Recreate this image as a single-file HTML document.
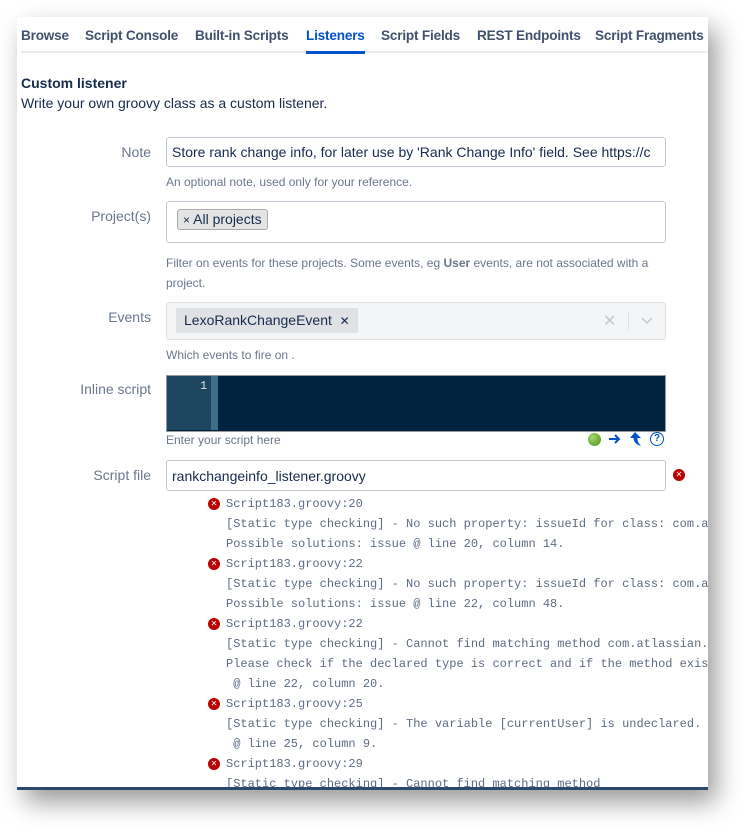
<!DOCTYPE html>
<html><head><meta charset="utf-8"><style>
body{margin:0;width:756px;height:837px;background:#fff;position:relative;overflow:hidden;font-family:"Liberation Sans",sans-serif;color:#172b4d}
.panel{position:absolute;left:17px;top:17px;width:691px;height:770px;background:#fff;box-shadow:8px 12px 24px rgba(0,0,0,.4);overflow:hidden;border-bottom:3px solid #2a4a6b}
.abs{position:absolute;white-space:nowrap}
.tab{position:absolute;top:11px;font-size:13.6px;font-weight:bold;color:#42526e;letter-spacing:-.2px}
.lbl{position:absolute;right:557px;font-size:14px;color:#6b778c}
.help{position:absolute;left:149px;font-size:12px;color:#6b778c}
.box{position:absolute;left:149px;width:498px;border:1px solid #c1c7d0;border-radius:3px;background:#fff}
.mono{position:absolute;left:209px;font-family:"Liberation Mono",monospace;font-size:12px;color:#5e6c84;white-space:pre}
.err{position:absolute;left:191px;width:12px;height:12px;border-radius:50%;background:#b00;color:#fff;font-size:8px;line-height:12px;text-align:center}
</style></head><body>
<div class="panel">
<div class="tab" style="left:4px">Browse</div>
<div class="tab" style="left:68px">Script Console</div>
<div class="tab" style="left:178px">Built-in Scripts</div>
<div class="tab" style="left:289px;color:#0052cc">Listeners</div>
<div class="tab" style="left:364px">Script Fields</div>
<div class="tab" style="left:460px">REST Endpoints</div>
<div class="tab" style="left:578px">Script Fragments</div>
<div class="abs" style="left:4px;top:34px;width:687px;height:2px;background:#ebecf0"></div>
<div class="abs" style="left:289px;top:34px;width:59px;height:3px;background:#0052cc"></div>
<div class="abs" style="left:4px;top:58px;font-size:14px;font-weight:bold">Custom listener</div>
<div class="abs" style="left:4px;top:78px;font-size:14px">Write your own groovy class as a custom listener.</div>

<div class="lbl" style="top:127px">Note</div>
<div class="box" style="top:120px;height:28px;overflow:hidden"><div class="abs" style="left:5px;top:6px;font-size:14px">Store rank change info, for later use by 'Rank Change Info' field. See https://c</div></div>
<div class="help" style="top:158px">An optional note, used only for your reference.</div>

<div class="lbl" style="top:191px">Project(s)</div>
<div class="box" style="top:184px;height:40px"><div class="abs" style="left:10px;top:7px;height:19px;padding:0 5px;border:1px solid #aaa;border-radius:3px;background:#e4e4e4;font-size:14px;line-height:19px"><span style="font-size:12px">×</span> All projects</div></div>
<div class="help" style="top:236px;line-height:20px;white-space:normal;width:500px">Filter on events for these projects. Some events, eg <b>User</b> events, are not associated with a project.</div>

<div class="lbl" style="top:292px">Events</div>
<div class="box" style="top:285px;height:36px;background:#f4f5f7;border-color:#dfe1e6"><div class="abs" style="left:9px;top:5px;height:25px;padding:0 8px;background:#e0e1e4;border-radius:2px;font-size:14px;line-height:25px">LexoRankChangeEvent&nbsp;&nbsp;<span style="font-size:12px">✕</span></div>
<div class="abs" style="left:436px;top:8px;color:#c1c7d0;font-size:16px">✕</div>
<div class="abs" style="left:461px;top:8px;width:1px;height:20px;background:#dfe1e6"></div>
<svg class="abs" style="left:474px;top:14px" width="12" height="8"><path d="M1 1 L6 6 L11 1" stroke="#c1c7d0" stroke-width="1.5" fill="none"/></svg></div>
<div class="help" style="top:331px">Which events to fire on .</div>

<div class="lbl" style="top:364px">Inline script</div>
<div class="abs" style="left:149px;top:358px;width:498px;height:55px;background:#012340;border:1px solid #999"></div>
<div class="abs" style="left:150px;top:359px;width:44px;height:54px;background:#1e4560"></div>
<div class="abs" style="left:194px;top:359px;width:7px;height:54px;background:#3e6e8a"></div>
<div class="abs" style="left:183px;top:362px;color:#ddd;font-family:'Liberation Mono',monospace;font-size:12px">1</div>
<div class="help" style="top:416px">Enter your script here</div>
<div class="abs" style="left:571px;top:416px;width:13px;height:13px;border-radius:50%;background:radial-gradient(circle at 35% 35%,#a5d86a,#4a8f1d)"></div>
<svg class="abs" style="left:591px;top:416px" width="14" height="12"><path d="M1 6 H11 M7 2 L11 6 L7 10" stroke="#0052cc" stroke-width="2" fill="none"/></svg>
<svg class="abs" style="left:612px;top:414px" width="14" height="16"><path d="M6 1 L1 7 H4.5 Q5 13 12 15 Q8 11 8.5 7 H12 Z" fill="#0052cc"/></svg>
<div class="abs" style="left:633px;top:415px;width:12px;height:12px;border:1.5px solid #0052cc;border-radius:50%;color:#0052cc;font-size:10px;line-height:12px;text-align:center;font-weight:bold">?</div>

<div class="lbl" style="top:450px">Script file</div>
<div class="box" style="top:443px;height:29px"><div class="abs" style="left:5px;top:7px;font-size:14px">rankchangeinfo_listener.groovy</div></div>
<div class="abs" style="left:656px;top:452px;width:12px;height:12px;border-radius:50%;background:#b00;color:#fff;font-size:8px;line-height:12px;text-align:center">✕</div>

<div class="err" style="top:481px">✕</div><div class="mono" style="top:480px">Script183.groovy:20</div>
<div class="mono" style="top:500px">[Static type checking] - No such property: issueId for class: com.atlassian</div>
<div class="mono" style="top:520px">Possible solutions: issue @ line 20, column 14.</div>
<div class="err" style="top:541px">✕</div><div class="mono" style="top:540px">Script183.groovy:22</div>
<div class="mono" style="top:560px">[Static type checking] - No such property: issueId for class: com.atlassian</div>
<div class="mono" style="top:580px">Possible solutions: issue @ line 22, column 48.</div>
<div class="err" style="top:601px">✕</div><div class="mono" style="top:600px">Script183.groovy:22</div>
<div class="mono" style="top:620px">[Static type checking] - Cannot find matching method com.atlassian.</div>
<div class="mono" style="top:640px">Please check if the declared type is correct and if the method exists.</div>
<div class="mono" style="top:660px"> @ line 22, column 20.</div>
<div class="err" style="top:681px">✕</div><div class="mono" style="top:680px">Script183.groovy:25</div>
<div class="mono" style="top:700px">[Static type checking] - The variable [currentUser] is undeclared.</div>
<div class="mono" style="top:720px"> @ line 25, column 9.</div>
<div class="err" style="top:741px">✕</div><div class="mono" style="top:740px">Script183.groovy:29</div>
<div class="mono" style="top:760px">[Static type checking] - Cannot find matching method</div>
</div>
</body></html>
